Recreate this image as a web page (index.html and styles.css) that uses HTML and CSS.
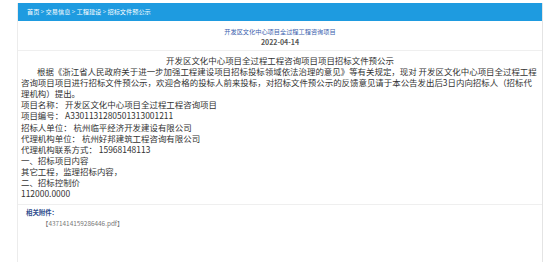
FILE: index.html
```html
<!DOCTYPE html>
<html lang="zh-CN">
<head>
    <meta charset="UTF-8">
    <meta name="viewport" content="width=device-width, initial-scale=1.0">
    <title>招标文件预公示</title>
    <link rel="stylesheet" href="styles.css">
</head>
<body>
    <div class="page">
        <div class="crumb">首页 &gt; 交易信息 &gt; 工程建设 &gt; 招标文件预公示</div>

        <div class="info">
            <div class="info-title">开发区文化中心项目全过程工程咨询项目</div>
            <div class="info-date">2022-04-14</div>
        </div>

        <div class="content">
            <p class="heading">开发区文化中心项目全过程工程咨询项目项目招标文件预公示</p>
            <p class="intro">根据《浙江省人民政府关于进一步加强工程建设项目招标投标领域依法治理的意见》等有关规定，现对 开发区文化中心项目全过程工程咨询项目项目进行招标文件预公示，欢迎合格的投标人前来投标，对招标文件预公示的反馈意见请于本公告发出后3日内向招标人（招标代理机构）提出。</p>
            <p>项目名称： 开发区文化中心项目全过程工程咨询项目</p>
            <p>项目编号： A3301131280501313001211</p>
            <p>招标人单位： 杭州临平经济开发建设有限公司</p>
            <p>代理机构单位： 杭州好邦建筑工程咨询有限公司</p>
            <p>代理机构联系方式： 15968148113</p>
            <p>一、招标项目内容</p>
            <p>其它工程，监理招标内容，</p>
            <p>二、招标控制价</p>
            <p>112000.0000</p>
        </div>

        <div class="attach">
            <div class="attach-title">相关附件：</div>
            <div class="attach-file">【4371414159286446.pdf】</div>
        </div>
    </div>
</body>
</html>
```

FILE: styles.css
```css
* {
    margin: 0;
    padding: 0;
    box-sizing: border-box;
}

body {
    font-family: "Noto Sans CJK SC", "Noto Sans", sans-serif;
    background-color: #ffffff;
    color: #333;
}

.page {
    width: 526px;
    min-height: 259px;
    margin: 3px 0 0 17px;
    border-left: 1px solid #ececec;
    border-right: 1px solid #e4e4e4;
}

.crumb {
    height: 18px;
    line-height: 18px;
    padding-left: 9px;
    background-color: #1e9be0;
    color: #ffffff;
    font-size: 6.2px;
}

.info {
    text-align: center;
    padding: 6px 0 3px;
    border-bottom: 1px solid #efefef;
}

.info-title {
    font-size: 6.2px;
    line-height: 10px;
    color: #3c5fae;
}

.info-date {
    font-size: 7px;
    line-height: 10px;
    font-weight: bold;
    color: #555;
}

.content {
    padding: 4px 3px 5px 3px;
    font-size: 8.45px;
    line-height: 11.1px;
    border-bottom: 1px solid #efefef;
}

.heading {
    text-align: center;
}

.intro {
    text-indent: 16px;
}

.attach {
    padding: 2px 0 0 8px;
    font-size: 6.4px;
    line-height: 11px;
}

.attach-title {
    font-weight: bold;
    color: #2b4c8c;
}

.attach-file {
    padding-left: 16px;
    color: #777;
}
```
